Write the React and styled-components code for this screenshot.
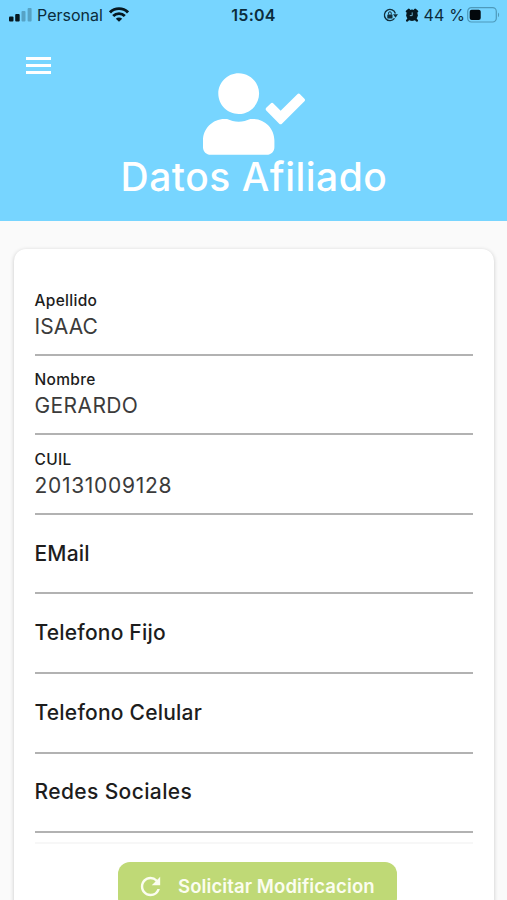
import React from "react";
import styled, { createGlobalStyle } from "styled-components";
import { FaUserCheck } from "react-icons/fa";
import { MdRefresh } from "react-icons/md";

const GlobalStyle = createGlobalStyle`
  * { box-sizing: border-box; }
  body {
    margin: 0;
    background: #fafafa;
    font-family: Inter, "Liberation Sans", sans-serif;
    overflow: hidden;
  }
`;

const Screen = styled.div`
  width: 507px;
  height: 900px;
  overflow: hidden;
  background: #fafafa;
`;

const Header = styled.header`
  height: 221px;
  background: #77d5ff;
  color: #fff;
`;

const StatusBar = styled.div`
  display: grid;
  grid-template-columns: 1fr auto 1fr;
  height: 29px;
  padding: 0 7px 0 9px;
  align-items: center;
  color: #0b2c3c;
  font-size: 16px;
  line-height: 20px;
  white-space: nowrap;
`;

const StatusGroup = styled.div`
  display: flex;
  align-items: center;
  justify-content: ${(p) => (p.$end ? "flex-end" : "flex-start")};
`;

const Carrier = styled.span`
  margin: 0 6px 0 5px;
  letter-spacing: 0px;
`;

const Clock = styled.span`
  font-weight: 600;
  letter-spacing: 0.25px;
  margin-right: 2px;
`;

const Percent = styled.span`
  margin: 0 2px 0 5px;
  letter-spacing: 0.15px;
`;

const Nav = styled.nav`
  display: flex;
  height: 44px;
  padding: 28px 0 0 26px;
`;

const MenuButton = styled.button`
  display: flex;
  flex-direction: column;
  justify-content: space-between;
  width: 25px;
  height: 17px;
  padding: 0;
  border: 0;
  background: none;
`;

const MenuLine = styled.span`
  height: 3px;
  background: #fff;
`;

const Hero = styled.div`
  display: flex;
  flex-direction: column;
  align-items: center;
`;

const HeroIcon = styled(FaUserCheck)`
  width: 102px;
  height: 82px;
`;

const Title = styled.h1`
  margin: 0;
  padding-left: 1px;
  font-size: 39px;
  font-weight: 500;
  line-height: 44px;
  letter-spacing: 0.5px;
  white-space: nowrap;
`;

const Card = styled.main`
  margin: 28px 13px 0 14px;
  height: 700px;
  padding: 27px 21px 0 20.5px;
  border-radius: 12px;
  background: #fff;
  box-shadow: 0 1px 4px rgba(0, 0, 0, 0.2);
`;

const Field = styled.div`
  display: flex;
  flex-direction: column;
  justify-content: ${(p) => (p.$filled ? "flex-end" : "center")};
  height: 79.6px;
  padding-bottom: ${(p) => (p.$filled ? "13px" : "0")};
  border-bottom: 2px solid #b2b2b2;
  white-space: nowrap;
`;

const Label = styled.span`
  font-size: ${(p) => (p.$small ? "15.5px" : "21px")};
  line-height: 24px;
  font-weight: 500;
  letter-spacing: ${(p) => p.$track}px;
  color: #1d1d1d;
`;

const Value = styled.span`
  font-size: 21px;
  line-height: 28px;
  letter-spacing: ${(p) => p.$track}px;
  color: #3b3b3b;
`;

const Divider = styled.hr`
  height: 2px;
  margin: 9px 0 18px;
  border: 0;
  background: #f7f7f7;
`;

const SubmitButton = styled.button`
  display: flex;
  align-items: center;
  width: 279px;
  height: 48px;
  margin: 0 0 0 83.5px;
  padding: 0 0 0 18px;
  gap: 13px;
  border: 0;
  border-radius: 12px;
  background: #bfd976;
  color: #fbfdf0;
  font: 600 18.5px/24px Inter, sans-serif;
  letter-spacing: 0.1px;
  white-space: nowrap;
`;

const fields = [
  { label: "Apellido", value: "ISAAC", track: 0.3, valueTrack: 0.1 },
  { label: "Nombre", value: "GERARDO", track: 0.3, valueTrack: 0.4 },
  { label: "CUIL", value: "20131009128", track: 0.3, valueTrack: 0.7 },
  { label: "EMail", track: 0.2 },
  { label: "Telefono Fijo", track: 0.2 },
  { label: "Telefono Celular", track: 0.22 },
  { label: "Redes Sociales", track: 0.38 },
];

const Signal = () => (
  <svg width="23" height="14" viewBox="0 0 23 14">
    <rect x="0" y="8.5" width="4.5" height="5" rx="1" fill="#061820" />
    <rect x="6.2" y="6" width="4.5" height="7.5" rx="1" fill="#061820" />
    <rect x="12.5" y="3" width="4" height="10.5" rx="1" fill="#56a3c5" />
    <rect x="18.6" y="0" width="4" height="13.5" rx="1" fill="#56a3c5" />
  </svg>
);

const Wifi = () => (
  <svg width="20" height="15" viewBox="0 0 20 15" fill="none" stroke="#061820" strokeWidth="2.9">
    <path d="M1 5.4a12.7 12.7 0 0 1 18 0M4.2 9a8.2 8.2 0 0 1 11.6 0" />
    <path d="M10 14.8 6.8 11.8a4.5 4.5 0 0 1 6.4 0Z" fill="#061820" stroke="none" />
  </svg>
);

const RotationLock = () => (
  <svg width="15" height="14" viewBox="0 0 15 14" fill="none" stroke="#12303d" strokeWidth="1.3">
    <path d="M11.5 10.4A5.6 5.6 0 1 1 12.4 5.5" />
    <path d="m10 6.2 5 .1-2.5 3.4z" fill="#12303d" stroke="none" />
    <rect x="4.3" y="6.4" width="5.2" height="4" rx=".5" fill="#12303d" stroke="none" />
    <path d="M5.5 6.5V5.2a1.4 1.4 0 0 1 2.8 0v1.3" strokeWidth="1" />
  </svg>
);

const Alarm = () => (
  <svg width="14" height="14" viewBox="0 0 14 14">
    <path d="m2 3.4 1.8-1.6M12 3.4l-1.8-1.6M3.5 11l-1.3 1.5M10.5 11l1.3 1.5" stroke="#061820" strokeWidth="2.4" strokeLinecap="round" />
    <circle cx="7" cy="7.2" r="5.8" fill="#061820" />
    <path d="M7.2 4.4v3.2H4.8" fill="none" stroke="#77bdda" strokeWidth="0.9" />
  </svg>
);

const Battery = () => (
  <svg width="33" height="16" viewBox="0 0 33 16">
    <rect x=".7" y=".7" width="28.6" height="14.3" rx="3.7" fill="none" stroke="#4e9abb" strokeWidth="1.2" />
    <rect x="2.7" y="2.8" width="11" height="10.2" rx="2" fill="#02080c" />
    <path d="M31 5.6c1.5.7 1.5 3.9 0 4.6z" fill="#4e9abb" />
  </svg>
);

const AlarmSlot = styled.span`
  display: flex;
  margin-left: 7px;
`;

export default function App() {
  return (
    <Screen>
      <GlobalStyle />
      <Header>
        <StatusBar>
          <StatusGroup>
            <Signal />
            <Carrier>Personal</Carrier>
            <Wifi />
          </StatusGroup>
          <Clock>15:04</Clock>
          <StatusGroup $end>
            <RotationLock />
            <AlarmSlot>
              <Alarm />
            </AlarmSlot>
            <Percent>44 %</Percent>
            <Battery />
          </StatusGroup>
        </StatusBar>
        <Nav>
          <MenuButton aria-label="Menu">
            <MenuLine />
            <MenuLine />
            <MenuLine />
          </MenuButton>
        </Nav>
        <Hero>
          <HeroIcon />
          <Title>Datos Afiliado</Title>
        </Hero>
      </Header>
      <Card>
        {fields.map(({ label, value, track, valueTrack }) => (
          <Field key={label} $filled={Boolean(value)}>
            <Label $small={Boolean(value)} $track={track}>{label}</Label>
            {value && <Value $track={valueTrack}>{value}</Value>}
          </Field>
        ))}
        <Divider />
        <SubmitButton>
          <MdRefresh size={29} />
          Solicitar Modificacion
        </SubmitButton>
      </Card>
    </Screen>
  );
}
